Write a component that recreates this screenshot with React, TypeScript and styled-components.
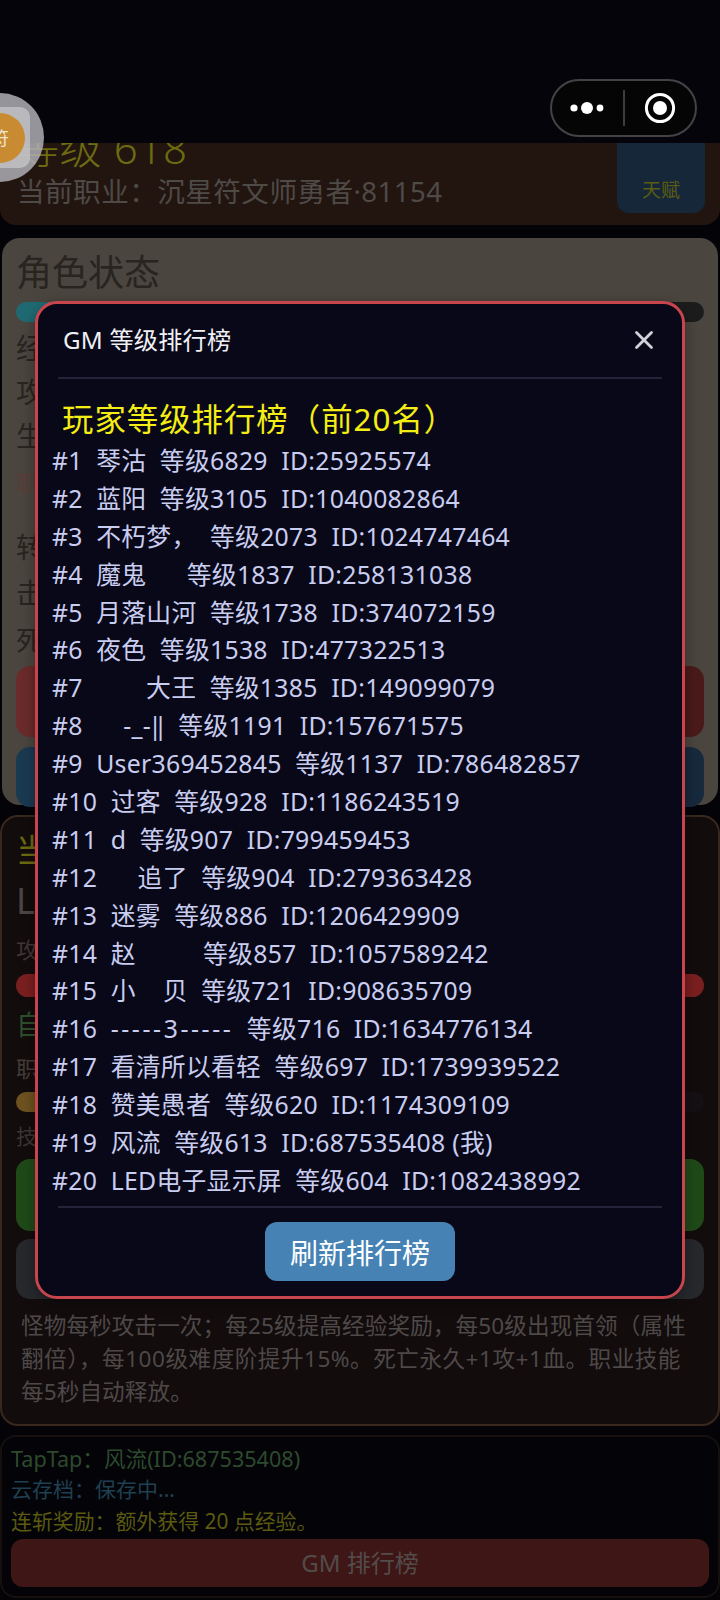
import React from "react";
import styled, { createGlobalStyle } from "styled-components";
import { X } from "lucide-react";

const Global = createGlobalStyle`
  html, body { margin: 0; padding: 0; background: #040408; }
  * { box-sizing: border-box; }
`;

const Screen = styled.div`
  position: relative;
  width: 720px;
  height: 1600px;
  overflow: hidden;
  background: #040408;
  font-family: "Noto Sans", "Noto Sans CJK SC", sans-serif;
`;

const TopBar = styled.header`
  position: relative;
  z-index: 1;
  height: 143px;
  padding: 79px 23px 0 0;
  background: #04040a;
  display: flex;
  justify-content: flex-end;
  align-items: flex-start;
`;

const Capsule = styled.div`
  width: 147px;
  height: 58px;
  border: 2px solid #434347;
  border-radius: 29px;
  background: #050506;
  display: grid;
  grid-template-columns: 1fr 2px 1fr;
  align-items: center;
  justify-items: center;
`;

const CapsuleRule = styled.span`
  width: 2px;
  height: 36px;
  background: #3d3d40;
`;

const Ball = styled.div`
  position: absolute;
  z-index: 2;
  left: -44px;
  top: 93px;
  width: 88px;
  height: 89px;
  border-radius: 50%;
  background: rgba(176, 176, 182, 0.84);
  display: flex;
  align-items: center;
  justify-content: center;
`;

const BallInner = styled.div`
  width: 60px;
  height: 61px;
  border-radius: 10px;
  background: rgba(200, 200, 202, 0.72);
  display: flex;
  align-items: center;
  justify-content: center;
`;

const Coin = styled.div`
  flex: none;
  width: 50px;
  height: 50px;
  border-radius: 50%;
  background: #c98b32;
  color: #efe6d2;
  font-size: 18px;
  line-height: 50px;
  text-align: center;
`;

const Cards = styled.main`
  display: flex;
  flex-direction: column;
`;

const HeroCard = styled.section`
  height: 82px;
  padding: 0 15px 12px 17px;
  background: #22150f;
  border-radius: 0 0 16px 16px;
  overflow: hidden;
  display: flex;
  justify-content: space-between;
`;

const LevelText = styled.div`
  margin-top: -20px;
  font-size: 42px;
  line-height: 49px;
  font-weight: 300;
  color: #6d6b12;
  letter-spacing: 0.6px;
`;

const ClassText = styled.div`
  margin-top: -1px;
  font-size: 27.6px;
  line-height: 40px;
  color: #4e4a47;
  letter-spacing: 0.45px;
`;

const TalentButton = styled.div`
  width: 88px;
  height: 70px;
  padding-top: 30px;
  border-radius: 0 0 12px 12px;
  background: #152738;
  color: #5c5c14;
  font-size: 19px;
  line-height: 34px;
  text-align: center;
`;

const StatusCard = styled.section`
  height: 567px;
  margin: 13px 2px 0;
  padding: 13px 14px 0;
  background: #4a453e;
  border-radius: 18px;
`;

const Line = styled.div<{ $size: number; $color: string; $h: number; $mt?: number }>`
  height: ${(p) => p.$h}px;
  margin-top: ${(p) => p.$mt ?? 0}px;
  font-size: ${(p) => p.$size}px;
  line-height: ${(p) => p.$h}px;
  color: ${(p) => p.$color};
  white-space: nowrap;
`;

const Bar = styled.div<{ $h: number; $mt: number; $track: string; $fill: string; $pct: number }>`
  height: ${(p) => p.$h}px;
  margin-top: ${(p) => p.$mt}px;
  border-radius: ${(p) => p.$h / 2}px;
  background: linear-gradient(to right, ${(p) => p.$fill} ${(p) => p.$pct}%, ${(p) => p.$track} ${(p) => p.$pct}%);
`;

const Block = styled.div<{ $h: number; $mt: number; $bg: string }>`
  height: ${(p) => p.$h}px;
  margin-top: ${(p) => p.$mt}px;
  border-radius: 14px;
  background: ${(p) => p.$bg};
`;

const MonsterCard = styled.section`
  height: 611px;
  margin: 10px 0 0;
  padding: 13px 14px 0;
  background: #120c0d;
  border: 2px solid #38281e;
  border-radius: 18px;
`;

const RulesText = styled.p`
  margin: 10px 0 0 5px;
  font-size: 22.6px;
  line-height: 33px;
  color: #4e4948;
`;

const RuleLine = styled.span<{ $ls: number }>`
  display: block;
  white-space: nowrap;
  letter-spacing: ${(p) => p.$ls}px;
`;

const LogCard = styled.section`
  height: 163px;
  margin: 9px 0 0;
  padding: 7px 9px 0;
  background: #030308;
  border: 2px solid #16100e;
  border-radius: 16px;
`;

const GmButton = styled.div`
  height: 48px;
  margin-top: 3px;
  border-radius: 12px;
  background: #3f1616;
  color: #524b4a;
  font-size: 24px;
  line-height: 48px;
  text-align: center;
`;

const Overlay = styled.div`
  position: absolute;
  z-index: 1;
  inset: 0;
  display: flex;
  align-items: center;
  justify-content: center;
`;

const Modal = styled.div`
  width: 650px;
  height: 998px;
  border: 3px solid #c8454d;
  border-radius: 22px;
  background: #080818;
  box-shadow: 0 4px 14px rgba(0, 0, 0, 0.35);
  padding: 0 20px;
  display: flex;
  flex-direction: column;
`;

const ModalHeader = styled.div`
  height: 75px;
  flex: none;
  padding: 0 3px 2px 5px;
  border-bottom: 2px solid #23233a;
  display: flex;
  align-items: center;
  justify-content: space-between;
`;

const ModalTitle = styled.h2`
  margin: 0 0 3px;
  font-size: 24.2px;
  font-weight: 400;
  letter-spacing: 0.2px;
  color: #f0f0f4;
`;

const CloseIcon = styled(X)`
  color: #d2d2da;
`;

const Board = styled.div`
  flex: 1;
  margin: 19px -6px 0;
`;

const BoardTitle = styled.h3`
  margin: 0 0 0 10px;
  height: 44px;
  font-size: 31.4px;
  line-height: 42px;
  font-weight: 400;
  letter-spacing: 1px;
  color: #f4ee14;
  white-space: pre;
`;

const Row = styled.div`
  height: 37.9px;
  font-size: 24.8px;
  line-height: 37.9px;
  letter-spacing: 0.28px;
  color: #c9cdf0;
  white-space: pre;
`;

const WideDashes = styled.span`
  letter-spacing: 2.6px;
`;

const ModalFooter = styled.div`
  flex: none;
  height: 90px;
  padding-top: 14px;
  border-top: 2px solid #23233a;
  display: flex;
  justify-content: center;
`;

const RefreshButton = styled.button`
  width: 190px;
  height: 59px;
  padding: 0;
  border: 0;
  border-radius: 12px;
  background: #4682b4;
  color: #fff;
  font-family: inherit;
  font-size: 28px;
`;

const ranks: React.ReactNode[] = [
  "#1  琴沽  等级6829  ID:25925574",
  "#2  蓝阳  等级3105  ID:1040082864",
  "#3  不朽梦，  等级2073  ID:1024747464",
  "#4  魔鬼      等级1837  ID:258131038",
  "#5  月落山河  等级1738  ID:374072159",
  "#6  夜色  等级1538  ID:477322513",
  "#7         \u200A大王  等级1385  ID:149099079",
  "#8      -_-‖  等级1191  ID:157671575",
  "#9  User369452845  等级1137  ID:786482857",
  "#10  过客  等级928  ID:1186243519",
  "#11  d  等级907  ID:799459453",
  "#12      追了  等级904  ID:279363428",
  "#13  迷雾  等级886  ID:1206429909",
  "#14  赵          等级857  ID:1057589242",
  "#15  小    贝  等级721  ID:908635709",
  <>
    #16{"  "}
    <WideDashes>-----3-----</WideDashes>
    {"  "}等级716  ID:1634776134
  </>,
  "#17  看清所以看轻  等级697  ID:1739939522",
  "#18  赞美愚者  等级620  ID:1174309109",
  "#19  风流  等级613  ID:687535408 (我)",
  "#20  LED电子显示屏  等级604  ID:1082438992",
];

const ink = "#28241f";

export default function App() {
  return (
    <Screen>
      <Global />
      <TopBar>
        <Capsule>
          <svg width="48" height="16" viewBox="0 0 48 16" aria-hidden="true">
            <circle cx="11" cy="8" r="3.6" fill="#fff" />
            <circle cx="24" cy="8" r="6" fill="#fff" />
            <circle cx="37" cy="8" r="3.4" fill="#fff" />
          </svg>
          <CapsuleRule />
          <svg width="34" height="34" viewBox="0 0 34 34" aria-hidden="true">
            <circle cx="17" cy="17" r="13.6" fill="none" stroke="#fff" strokeWidth="3" />
            <circle cx="17" cy="17" r="7" fill="#fff" />
          </svg>
        </Capsule>
      </TopBar>
      <Ball>
        <BallInner>
          <Coin>符</Coin>
        </BallInner>
      </Ball>
      <Cards>
        <HeroCard>
          <div>
            <LevelText>等级 618</LevelText>
            <ClassText>当前职业：沉星符文师勇者·81154</ClassText>
          </div>
          <TalentButton>天赋</TalentButton>
        </HeroCard>
        <StatusCard>
          <Line $size={36} $color={ink} $h={44}>角色状态</Line>
          <Bar $h={20} $mt={7} $track="#1c1c1c" $fill="#1f6a72" $pct={50} />
          <Line $size={28} $color={ink} $h={44} $mt={4}>经验</Line>
          <Line $size={28} $color={ink} $h={44}>攻击</Line>
          <Line $size={28} $color={ink} $h={44}>生命</Line>
          <Line $size={22} $color="#5a3d38" $h={44} $mt={2}>职业</Line>
          <Line $size={28} $color={ink} $h={44} $mt={21}>转生</Line>
          <Line $size={28} $color={ink} $h={44} $mt={2}>击杀</Line>
          <Line $size={28} $color={ink} $h={44} $mt={3}>死亡</Line>
          <Block $h={71} $mt={4} $bg="linear-gradient(to right, #6a2b2a, #4a1a1a)" />
          <Block $h={60} $mt={10} $bg="linear-gradient(to right, #1a3a52, #17293d)" />
        </StatusCard>
        <MonsterCard>
          <Line $size={32} $color="#6d6a12" $h={44} $mt={-2}>当前怪物</Line>
          <Line $size={36} $color="#4b4645" $h={40} $mt={9}>L</Line>
          <Line $size={22} $color="#403736" $h={30} $mt={13}>攻击</Line>
          <Bar $h={23} $mt={10} $track="#7a1f1f" $fill="#7a1f1f" $pct={100} />
          <Line $size={27} $color="#2d4f2d" $h={30} $mt={13}>自动</Line>
          <Line $size={22} $color="#453c38" $h={30} $mt={13}>职业</Line>
          <Bar $h={20} $mt={9} $track="#141014" $fill="#6d5220" $pct={20} />
          <Line $size={21} $color="#3b3533" $h={30} $mt={9}>技能</Line>
          <Block $h={72} $mt={8} $bg="#1f4a18" />
          <Block $h={60} $mt={8} $bg="#26282c" />
          <RulesText>
            <RuleLine $ls={0.1}>怪物每秒攻击一次；每25级提高经验奖励，每50级出现首领（属性</RuleLine>
            <RuleLine $ls={0.5}>翻倍），每100级难度阶提升15%。死亡永久+1攻+1血。职业技能</RuleLine>
            <RuleLine $ls={0.1}>每5秒自动释放。</RuleLine>
          </RulesText>
        </MonsterCard>
        <LogCard>
          <Line $size={21.6} $color="#2d4a2d" $h={30}>TapTap：风流(ID:687535408)</Line>
          <Line $size={21} $color="#1f4050" $h={30}>云存档：保存中...</Line>
          <Line $size={20.9} $color="#5c5a10" $h={30} $mt={2}>连斩奖励：额外获得 20 点经验。</Line>
          <GmButton>GM 排行榜</GmButton>
        </LogCard>
      </Cards>
      <Overlay>
        <Modal>
          <ModalHeader>
            <ModalTitle>GM 等级排行榜</ModalTitle>
            <CloseIcon size={30} strokeWidth={2.2} />
          </ModalHeader>
          <Board>
            <BoardTitle>玩家等级排行榜（前20名）</BoardTitle>
            {ranks.map((r, i) => (
              <Row key={i}>{r}</Row>
            ))}
          </Board>
          <ModalFooter>
            <RefreshButton>刷新排行榜</RefreshButton>
          </ModalFooter>
        </Modal>
      </Overlay>
    </Screen>
  );
}
